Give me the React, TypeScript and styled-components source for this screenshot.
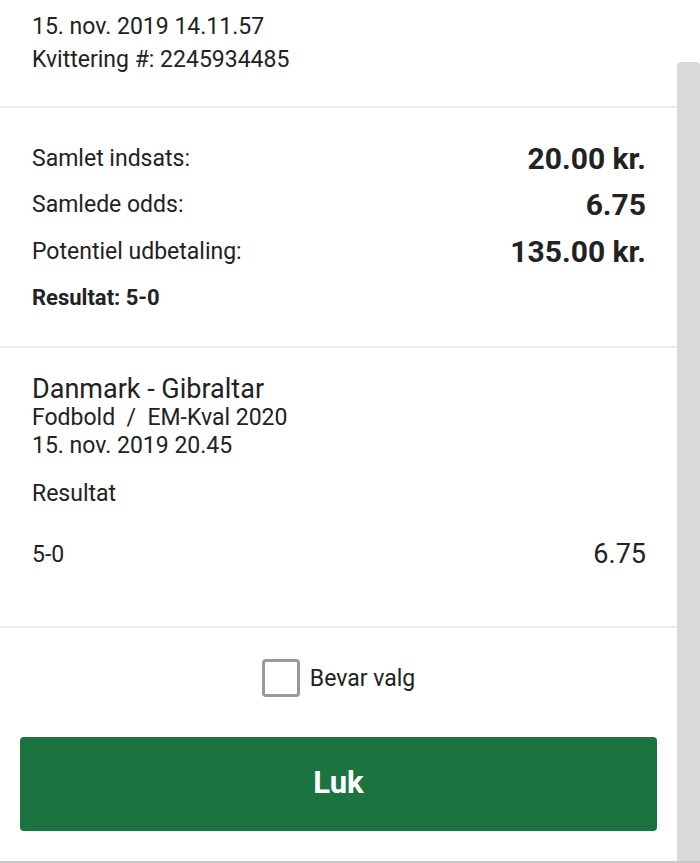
import React, { useState } from 'react';

import styled, { createGlobalStyle, css } from 'styled-components';

const GlobalStyle = createGlobalStyle`
	html, body {
		margin: 0;
		padding: 0;
		background: #ffffff;
	}
	* {
		box-sizing: border-box;
	}
`;

const Screen = styled.div`
	display: flex;
	width: 700px;
	height: 863px;
	overflow: hidden;
	font-family: Roboto, 'Liberation Sans', sans-serif;
	color: #222222;
	border-bottom: 2px solid #c9c9c9;
`;

const Receipt = styled.main`
	flex: 1;
	display: flex;
	flex-direction: column;
	background: #ffffff;
`;

const ScrollTrack = styled.div`
	width: 23px;
	padding-top: 62px;
	display: flex;
`;

const ScrollThumb = styled.div`
	flex: 1;
	background: #dadada;
	border-radius: 4px 4px 0 0;
`;

const Section = styled.section<{ top: number; bottom: number }>`
	padding: ${(p) => p.top}px 31px ${(p) => p.bottom}px 32px;
	border-bottom: 2px solid #ececec;
`;

const HeaderLine = styled.div`
	font-size: 23px;
	line-height: 33px;
`;

const SummaryRow = styled.div`
	display: flex;
	justify-content: space-between;
	align-items: center;
	height: 46.5px;
`;

const SummaryLabel = styled.span<{ strong?: boolean }>`
	font-size: 23px;
	${(p) =>
		p.strong &&
		css`
			font-weight: 700;
			font-size: 22px;
		`}
`;

const SummaryValue = styled.span`
	font-size: 30px;
	font-weight: 700;
`;

const EventTitle = styled.div`
	font-size: 27px;
	line-height: 30px;
`;

const EventMeta = styled.div`
	font-size: 23px;
	line-height: 28px;
`;

const MarketName = styled(EventMeta)`
	margin-top: 20px;
`;

const OutcomeRow = styled.div`
	display: flex;
	justify-content: space-between;
	align-items: center;
	margin-top: 31px;
	height: 30px;
`;

const Outcome = styled.span`
	font-size: 23px;
`;

const Odds = styled.span`
	font-size: 27px;
`;

const Footer = styled.div`
	display: flex;
	flex-direction: column;
	align-items: center;
	gap: 40px;
	padding: 31px 20px 0 20px;
`;

const KeepChoice = styled.label`
	display: flex;
	align-items: center;
	gap: 10px;
	font-size: 23px;
	cursor: pointer;
`;

const CheckBox = styled.span<{ checked: boolean }>`
	width: 38px;
	height: 38px;
	border: 3px solid #9a9a9a;
	border-radius: 4px;
	background: ${(p) => (p.checked ? '#1b7340' : '#ffffff')};
`;

const CloseButton = styled.button`
	width: 100%;
	height: 94px;
	padding-bottom: 4px;
	border: none;
	border-radius: 4px;
	background: #1b7340;
	color: #ffffff;
	font-family: Roboto, 'Liberation Sans', sans-serif;
	font-size: 31px;
	font-weight: 700;
	cursor: pointer;
`;

const summary = [
	{ label: 'Samlet indsats:', value: '20.00 kr.' },
	{ label: 'Samlede odds:', value: '6.75' },
	{ label: 'Potentiel udbetaling:', value: '135.00 kr.' },
];

export default function App() {
	const [keep, setKeep] = useState(false);

	return (
		<>
			<GlobalStyle />
			<Screen>
				<Receipt>
					<Section top={10} bottom={30}>
						<HeaderLine>15. nov. 2019 14.11.57</HeaderLine>
						<HeaderLine>Kvittering #: 2245934485</HeaderLine>
					</Section>
					<Section top={27} bottom={25}>
						{summary.map((row) => (
							<SummaryRow key={row.label}>
								<SummaryLabel>{row.label}</SummaryLabel>
								<SummaryValue>{row.value}</SummaryValue>
							</SummaryRow>
						))}
						<SummaryRow>
							<SummaryLabel strong>Resultat: 5-0</SummaryLabel>
						</SummaryRow>
					</Section>
					<Section top={26} bottom={57}>
						<EventTitle>Danmark - Gibraltar</EventTitle>
						<EventMeta>Fodbold&nbsp; /&nbsp; EM-Kval 2020</EventMeta>
						<EventMeta>15. nov. 2019 20.45</EventMeta>
						<MarketName>Resultat</MarketName>
						<OutcomeRow>
							<Outcome>5-0</Outcome>
							<Odds>6.75</Odds>
						</OutcomeRow>
					</Section>
					<Footer>
						<KeepChoice onClick={() => setKeep(!keep)}>
							<CheckBox checked={keep} />
							Bevar valg
						</KeepChoice>
						<CloseButton>Luk</CloseButton>
					</Footer>
				</Receipt>
				<ScrollTrack>
					<ScrollThumb />
				</ScrollTrack>
			</Screen>
		</>
	);
}
